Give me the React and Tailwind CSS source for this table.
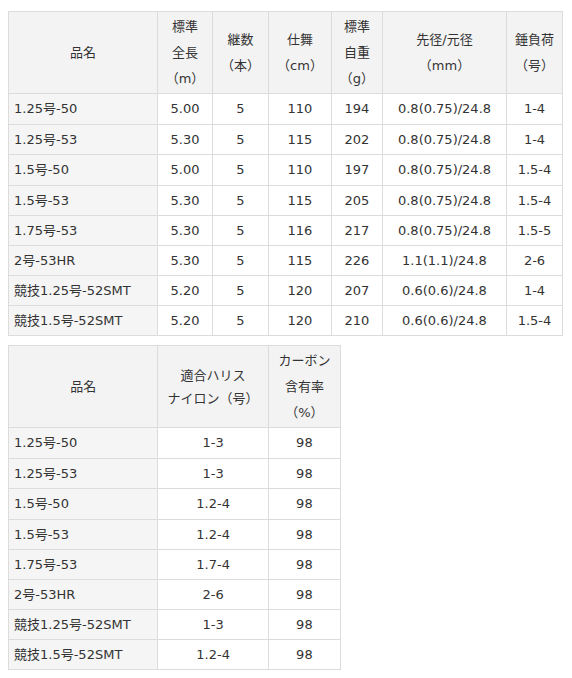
import React from "react";

const t1 = [
  ["1.25号-50", "5.00", "5", "110", "194", "0.8(0.75)/24.8", "1-4"],
  ["1.25号-53", "5.30", "5", "115", "202", "0.8(0.75)/24.8", "1-4"],
  ["1.5号-50", "5.00", "5", "110", "197", "0.8(0.75)/24.8", "1.5-4"],
  ["1.5号-53", "5.30", "5", "115", "205", "0.8(0.75)/24.8", "1.5-4"],
  ["1.75号-53", "5.30", "5", "116", "217", "0.8(0.75)/24.8", "1.5-5"],
  ["2号-53HR", "5.30", "5", "115", "226", "1.1(1.1)/24.8", "2-6"],
  ["競技1.25号-52SMT", "5.20", "5", "120", "207", "0.6(0.6)/24.8", "1-4"],
  ["競技1.5号-52SMT", "5.20", "5", "120", "210", "0.6(0.6)/24.8", "1.5-4"],
];

const t2 = [
  ["1.25号-50", "1-3", "98"],
  ["1.25号-53", "1-3", "98"],
  ["1.5号-50", "1.2-4", "98"],
  ["1.5号-53", "1.2-4", "98"],
  ["1.75号-53", "1.7-4", "98"],
  ["2号-53HR", "2-6", "98"],
  ["競技1.25号-52SMT", "1-3", "98"],
  ["競技1.5号-52SMT", "1.2-4", "98"],
];

const th = "border border-[#dcdcdc] bg-[#f3f3f3] font-normal text-center align-middle leading-[26px] p-0";
const tdFirst = "border border-[#dcdcdc] bg-[#f5f5f5] text-left pl-[5px] p-0 align-middle";
const td = "border border-[#dcdcdc] bg-white text-center p-0 align-middle";

function Body({ rows }) {
  return (
    <tbody>
      {rows.map((r, i) => (
        <tr key={i} className={i === 0 || i === 2 ? "h-[31px]" : "h-[30px]"}>
          {r.map((c, j) => (
            <td key={j} className={j === 0 ? tdFirst : td}>{c}</td>
          ))}
        </tr>
      ))}
    </tbody>
  );
}

export default function App() {
  return (
    <div
      className="w-[572px] h-[678px] bg-white text-[13px] text-[#333] pt-[11px] pl-[8px]"
      style={{ fontFamily: '"DejaVu Sans", "Noto Sans CJK JP", sans-serif' }}
    >
      <table className="table-fixed border-collapse w-[555px]">
        <thead>
          <tr className="h-[82px]">
            <th className={`${th} w-[149px]`}>品名</th>
            <th className={`${th} w-[55px]`}>標準<br />全長<br />（m）</th>
            <th className={`${th} w-[56px]`}>継数<br />（本）</th>
            <th className={`${th} w-[63px]`}>仕舞<br />（cm）</th>
            <th className={`${th} w-[51px]`}>標準<br />自重<br />（g）</th>
            <th className={`${th} w-[124px]`}>先径/元径<br />（mm）</th>
            <th className={`${th} w-[56px]`}>錘負荷<br />（号）</th>
          </tr>
        </thead>
        <Body rows={t1} />
      </table>

      <table className="table-fixed border-collapse w-[333px] mt-[9px]">
        <thead>
          <tr className="h-[82px]">
            <th className={`${th} w-[149px]`}>品名</th>
            <th className={`${th} w-[110px]`}><div className="leading-[23px]">適合ハリス<br />ナイロン（号）</div></th>
            <th className={`${th} w-[72px]`}>カーボン<br />含有率<br />（%）</th>
          </tr>
        </thead>
        <Body rows={t2} />
      </table>
    </div>
  );
}
